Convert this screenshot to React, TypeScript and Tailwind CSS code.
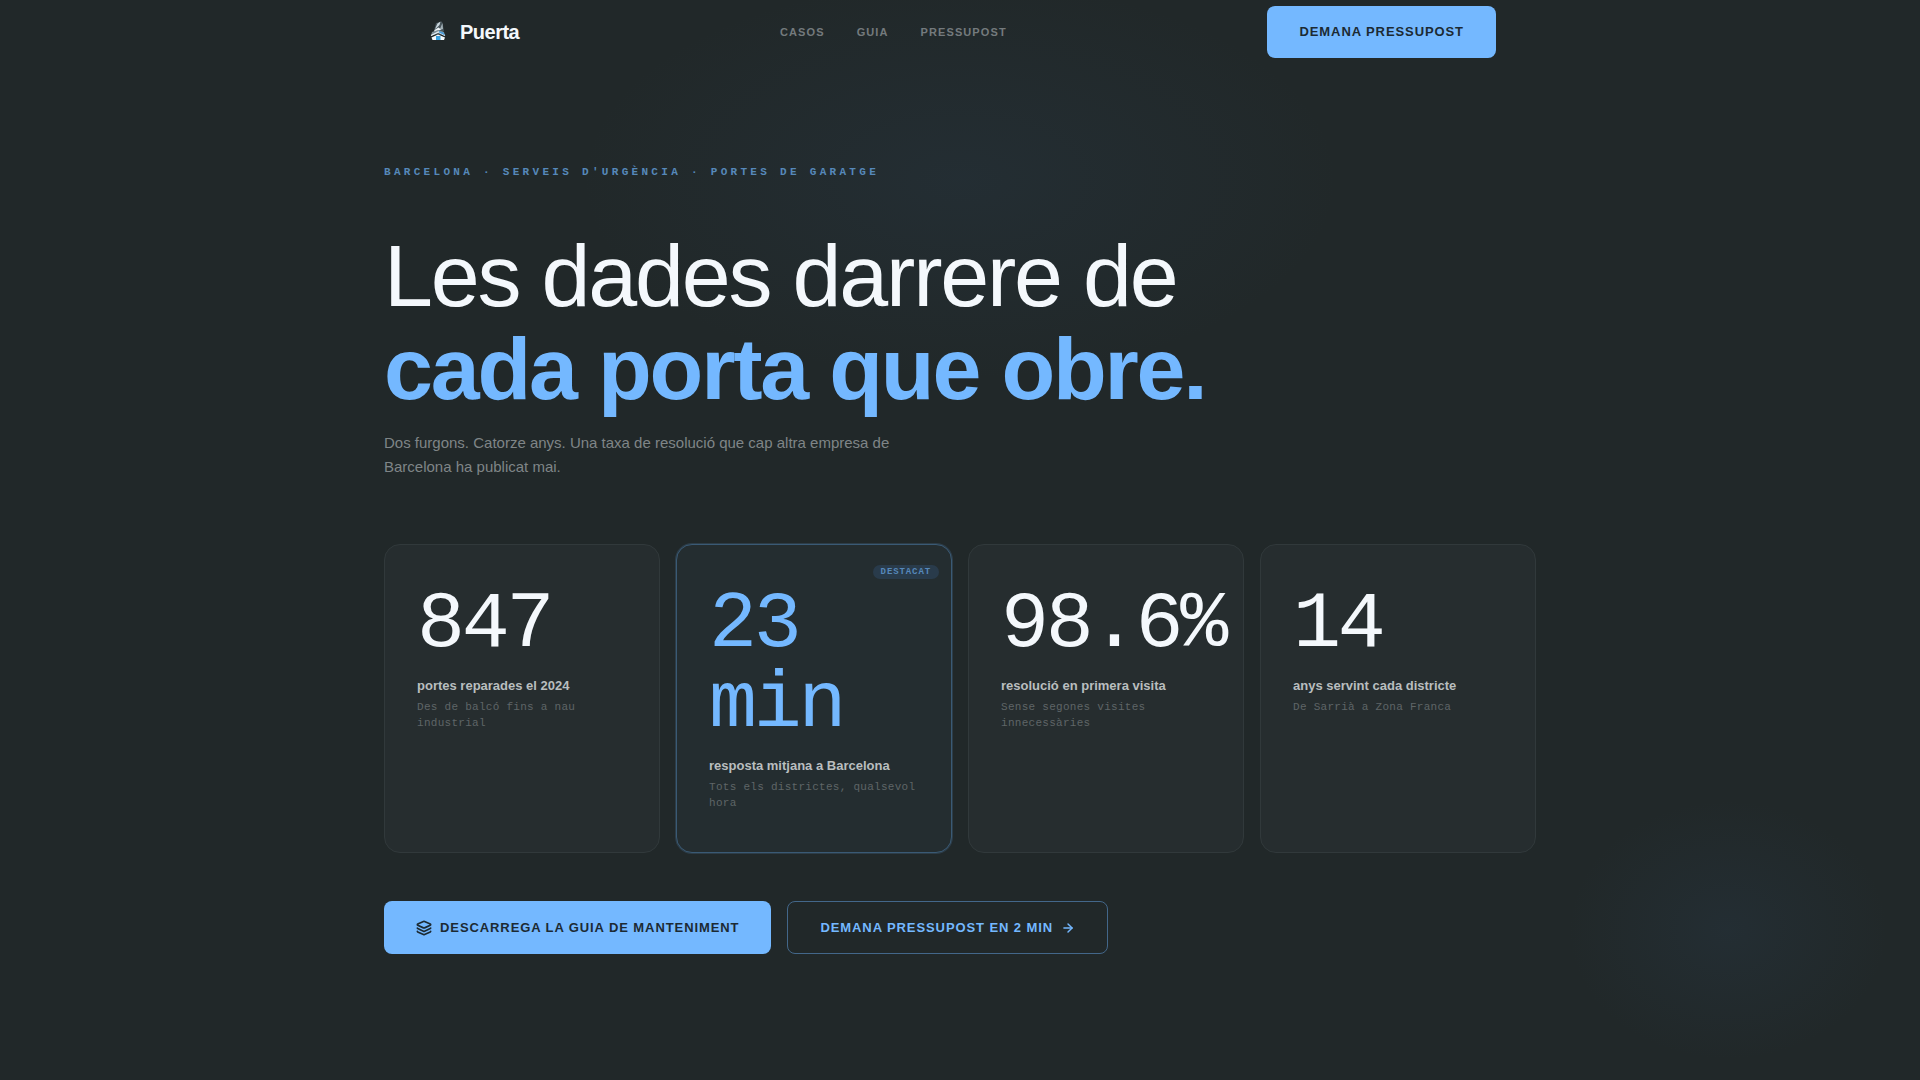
import clsx from "clsx";
import { ArrowRight, Layers } from "lucide-react";

type Stat = {
  value: string;
  label: string;
  detail: string;
  featured?: boolean;
};

const NAV_LINKS = [
  { label: "Casos", href: "#casos" },
  { label: "Guia", href: "#guia" },
  { label: "Pressupost", href: "#pressupost" },
];

const STATS: Stat[] = [
  {
    value: "847",
    label: "portes reparades el 2024",
    detail: "Des de balcó fins a nau industrial",
  },
  {
    value: "23 min",
    label: "resposta mitjana a Barcelona",
    detail: "Tots els districtes, qualsevol hora",
    featured: true,
  },
  {
    value: "98.6%",
    label: "resolució en primera visita",
    detail: "Sense segones visites innecessàries",
  },
  {
    value: "14",
    label: "anys servint cada districte",
    detail: "De Sarrià a Zona Franca",
  },
];

function Logo() {
  return (
    <svg viewBox="0 0 28 28" className="size-7" aria-hidden="true">
      <path d="M12 5l6-1.500 2 9-3 4H9z" fill="#47545a" />
      <path d="M13.500 5.500l3-2-1 3.500-3 3-1.500 1z" fill="#c9d6dc" />
      <path d="M18.500 5l.5 6-3.500 1z" fill="#a3b1b7" />
      <path d="M10.500 12l4-2.500 2.500 2-7 3z" fill="#eef4f7" />
      <path d="M7 18l1-4 6-2 6 2 1 4-7-3z" fill="#7f9098" />
      <path d="M7 17.500l7.500-3.500 6.500 3.500" fill="none" stroke="#e8f1f5" strokeWidth="1.200" />
      <path d="M15 13l4.500 1.500 1.500 3-6-3z" fill="#4a9edb" />
      <path d="M7.500 19.500l6.500-3 7 3-1 2.500H8.500z" fill="#f4f9fb" />
      <path d="M12 18h4.500v4H12z" fill="#3ba2df" />
    </svg>
  );
}

function Header() {
  return (
    <header className="mx-auto flex h-16 w-full max-w-[1152px] items-center justify-between px-10">
      <a href="#" className="flex items-center gap-2">
        <Logo />
        <span className="text-xl font-bold tracking-tight text-[#f4f8fc]">
          Puerta
        </span>
      </a>
      <nav className="flex items-center gap-8">
        {NAV_LINKS.map((link) => (
          <a
            key={link.href}
            href={link.href}
            className="text-[11px] leading-4 font-bold tracking-widest uppercase text-[#747a7d]"
          >
            {link.label}
          </a>
        ))}
      </nav>
      <a
        href="#pressupost"
        className="flex h-[52px] items-center rounded-lg bg-[#74b8ff] px-8 text-[13px] font-bold tracking-[0.07em] uppercase text-[#1c2a33]"
      >
        Demana pressupost
      </a>
    </header>
  );
}

function StatCard({ stat }: { stat: Stat }) {
  return (
    <article
      className={clsx(
        "relative rounded-2xl border px-8 pt-10 pb-[41px]",
        stat.featured
          ? "border-[#3a5a75] bg-[#242d30] ring-1 ring-[#74b8ff]/15"
          : "border-[#31393b] bg-[#262d2f]",
      )}
    >
      {stat.featured && (
        <span className="absolute top-5 right-3 rounded-full bg-[#293b4b] px-2 font-['Liberation_Mono',monospace] text-[9px] leading-[14px] font-bold tracking-widest uppercase text-[#5688ba]">
          Destacat
        </span>
      )}
      <p
        className={clsx(
          "mb-[11px] font-['Liberation_Mono',monospace] text-[80px] leading-[80px] tracking-[-0.04em]",
          stat.featured ? "text-[#74b8ff]" : "text-[#f4f8fc]",
        )}
      >
        {stat.value}
      </p>
      <h2 className="mb-1 text-[13px] leading-[19px] font-bold text-[#b9bebf]">
        {stat.label}
      </h2>
      <p className="font-['Liberation_Mono',monospace] text-[11px] leading-4 tracking-wide text-[#5f6567]">
        {stat.detail}
      </p>
    </article>
  );
}

export default function App() {
  return (
    <div className="min-h-screen bg-[#212829] bg-[radial-gradient(ellipse_380px_200px_at_50%_180px,rgba(52,84,120,0.13),transparent),radial-gradient(ellipse_160px_130px_at_90%_930px,rgba(52,84,120,0.13),transparent)] font-['Liberation_Sans',Arial,sans-serif] antialiased">
      <Header />

      <main className="mx-auto w-full max-w-[1152px] pt-[100px] pb-[126px]">
        <p className="mb-[49px] font-['Liberation_Mono',monospace] text-[11px] leading-4 font-bold tracking-[0.3em] uppercase text-[#5688ba]">
          Barcelona · Serveis d'urgència · Portes de garatge
        </p>

        <h1 className="mb-4 text-[88px] leading-[93px] tracking-tight text-[#f4f8fc]">
          Les dades darrere de
          <strong className="block font-bold text-[#74b8ff]">
            cada porta que obre.
          </strong>
        </h1>

        <p className="mb-[65px] max-w-[520px] text-[15px] leading-6 text-[#7f8587]">
          Dos furgons. Catorze anys. Una taxa de resolució que cap altra empresa
          de Barcelona ha publicat mai.
        </p>

        <section className="mb-12 grid grid-cols-4 gap-4">
          {STATS.map((stat) => (
            <StatCard key={stat.label} stat={stat} />
          ))}
        </section>

        <div className="flex items-center gap-4">
          <a
            href="#guia"
            className="flex h-[53px] items-center gap-2 rounded-lg bg-[#74b8ff] px-8 text-[13px] font-bold tracking-[0.07em] uppercase text-[#1c2a33]"
          >
            <Layers size={16} strokeWidth={2.5} aria-hidden="true" />
            Descarrega la guia de manteniment
          </a>
          <a
            href="#pressupost"
            className="flex h-[53px] items-center gap-2 rounded-lg border border-[#43678a] px-8 text-[13px] font-bold tracking-[0.07em] uppercase text-[#74b8ff]"
          >
            Demana pressupost en 2 min
            <ArrowRight size={14} strokeWidth={2.5} aria-hidden="true" />
          </a>
        </div>
      </main>
    </div>
  );
}
